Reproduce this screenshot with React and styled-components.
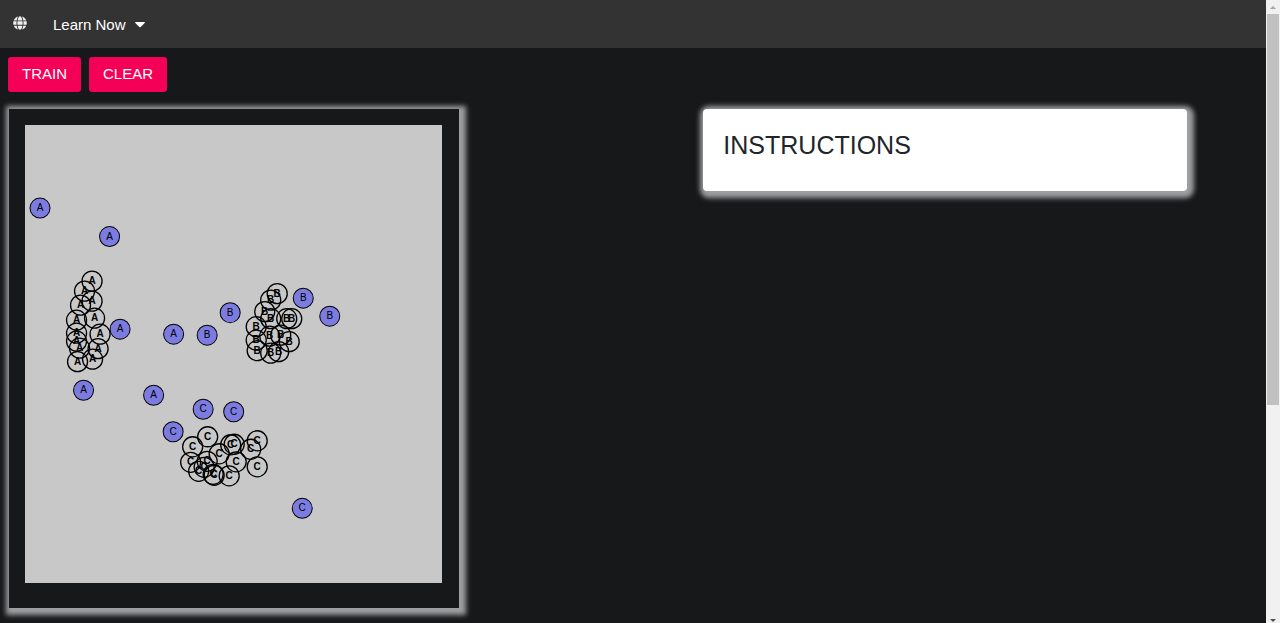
import React from "react";
import styled, { createGlobalStyle } from "styled-components";
import { FaGlobe } from "react-icons/fa";

const GlobalStyle = createGlobalStyle`
  * { box-sizing: border-box; }
  body {
    margin: 0;
    background: #17181a;
    font-family: "Liberation Sans", Arial, sans-serif;
  }
`;

const Shell = styled.div`
  display: flex;
  height: 100vh;
  overflow: hidden;
`;

const Page = styled.div`
  flex: 1;
  min-width: 0;
  overflow: hidden;
  background: #17181a;
`;

const NavBar = styled.nav`
  display: flex;
  align-items: center;
  height: 48px;
  padding: 0 13px;
  gap: 26px;
  background: #333;
`;

const HomeLink = styled.a`
  display: flex;
  color: #eee;
  font-size: 14px;
  padding-bottom: 2px;
`;

const MenuButton = styled.button`
  display: flex;
  align-items: center;
  gap: 9px;
  padding: 1px 0 0;
  border: 0;
  background: none;
  color: #fff;
  font: 15px/24px "Liberation Sans", Arial, sans-serif;
`;

const Actions = styled.div`
  display: flex;
  gap: 8px;
  padding: 9px 8px 0;
`;

const ActionButton = styled.button`
  height: 35px;
  padding: 0 14px 2px;
  border: 0;
  border-radius: 3px;
  background: #f50057;
  color: #fff;
  font: 15px/20px "Liberation Sans", Arial, sans-serif;
`;

const Columns = styled.main`
  display: grid;
  grid-template-columns: 55% 1fr;
  align-items: start;
  padding: 17px 0 15px 9px;
`;

const Board = styled.section`
  width: calc(65% + 1px);
  padding: 16px 17px 25px 16px;
  background: #17181a;
  box-shadow: 2px 2px 5px 5px #9e9fa1;
`;

const Plot = styled.svg`
  display: block;
  width: 100%;
  height: auto;
  background: #c8c8c8;
  font-family: "Liberation Sans", Arial, sans-serif;
`;

const Card = styled.section`
  margin: 0 79px 0 3px;
  padding: 20px 20px 29px;
  border-radius: 4px;
  background: #fff;
  box-shadow: 2px 2px 5px 5px #9e9fa1;
`;

const CardTitle = styled.h2`
  margin: 0;
  color: #212529;
  font-size: 25px;
  font-weight: 400;
  line-height: 33px;
`;

const ScrollRail = styled.aside`
  display: flex;
  flex-direction: column;
  align-items: center;
  width: 14px;
  height: 100%;
  background: #f1f1f1;
`;

const RailArrow = styled.svg`
  flex: none;
  width: 14px;
  height: 14px;
`;

const RailTrack = styled.div`
  flex: 1;
  width: 12px;
`;

const RailThumb = styled.div`
  height: calc(66% - 2px);
  background: #c1c1c1;
`;

const centroids = {
  A: [[15, 83], [84.5, 111.5], [95, 204], [148.5, 209], [58.5, 265], [128.5, 270]],
  B: [[205, 187.5], [182, 210], [278, 173], [304.5, 191]],
  C: [[178, 284], [208.5, 286.5], [148, 306.5], [277, 383]],
};

const samples = {
  A: [[67, 156], [59.5, 166], [67, 176], [55.5, 180], [69.5, 193], [51.5, 195], [51.5, 208], [51.5, 216], [75, 209], [73, 223.5], [54.5, 223], [52.5, 236.5], [67.5, 234]],
  B: [[252, 168.5], [245.5, 175], [239.5, 186.5], [245.5, 193.5], [261.5, 193.5], [266.5, 193.5], [231, 201.5], [231, 215], [232, 225.5], [244.5, 211], [255.5, 210], [264, 216.5], [245.5, 228], [253.5, 226.5]],
  C: [[182.5, 311.5], [167.5, 321.5], [194, 328.5], [205.5, 319.5], [209, 319], [232, 315.5], [225.5, 324], [211, 336.5], [232, 341.5], [204, 350.5], [165.5, 337], [182, 336], [179, 342], [173.5, 346], [188, 349], [189, 350]],
};

function Points({ groups, filled }) {
  return Object.entries(groups).flatMap(([label, points]) =>
    points.map(([x, y]) => (
      <g key={`${label}-${x}-${y}`}>
        <circle
          cx={x}
          cy={y}
          r="10"
          fill={filled ? "#7b7be0" : "none"}
          stroke="#000"
          strokeWidth={filled ? 1 : 1.3}
        />
        <text
          x={x}
          y={y + 3}
          textAnchor="middle"
          fontSize="10"
          fontWeight={filled ? 400 : 700}
        >
          {label}
        </text>
      </g>
    ))
  );
}

export default function App() {
  return (
    <>
      <GlobalStyle />
      <Shell>
        <Page>
          <NavBar>
            <HomeLink href="#" aria-label="Home">
              <FaGlobe aria-hidden="true" />
            </HomeLink>
            <MenuButton type="button" aria-haspopup="menu">
              Learn Now
              <svg width="10" height="6" viewBox="0 0 10 6" aria-hidden="true">
                <path d="M.7 0h8.6q1 .2.4 1L5.7 4.9q-.7.6-1.4 0L.3 1Q-.3.2.7 0Z" fill="#fff" />
              </svg>
            </MenuButton>
          </NavBar>
          <Actions>
            <ActionButton type="button">TRAIN</ActionButton>
            <ActionButton type="button">CLEAR</ActionButton>
          </Actions>
          <Columns>
            <Board>
              <Plot viewBox="0 0 417 458" role="img" aria-label="Clusters">
                <Points groups={samples} />
                <Points groups={centroids} filled />
              </Plot>
            </Board>
            <Card>
              <CardTitle>INSTRUCTIONS</CardTitle>
            </Card>
          </Columns>
        </Page>
        <ScrollRail aria-hidden="true">
          <RailArrow viewBox="0 0 14 14">
            <path d="M4 9h6L7 6Z" fill="#a3a3a3" />
          </RailArrow>
          <RailTrack>
            <RailThumb />
          </RailTrack>
          <RailArrow viewBox="0 0 14 14">
            <path d="M4 10h6l-3 3Z" fill="#505050" />
          </RailArrow>
        </ScrollRail>
      </Shell>
    </>
  );
}
